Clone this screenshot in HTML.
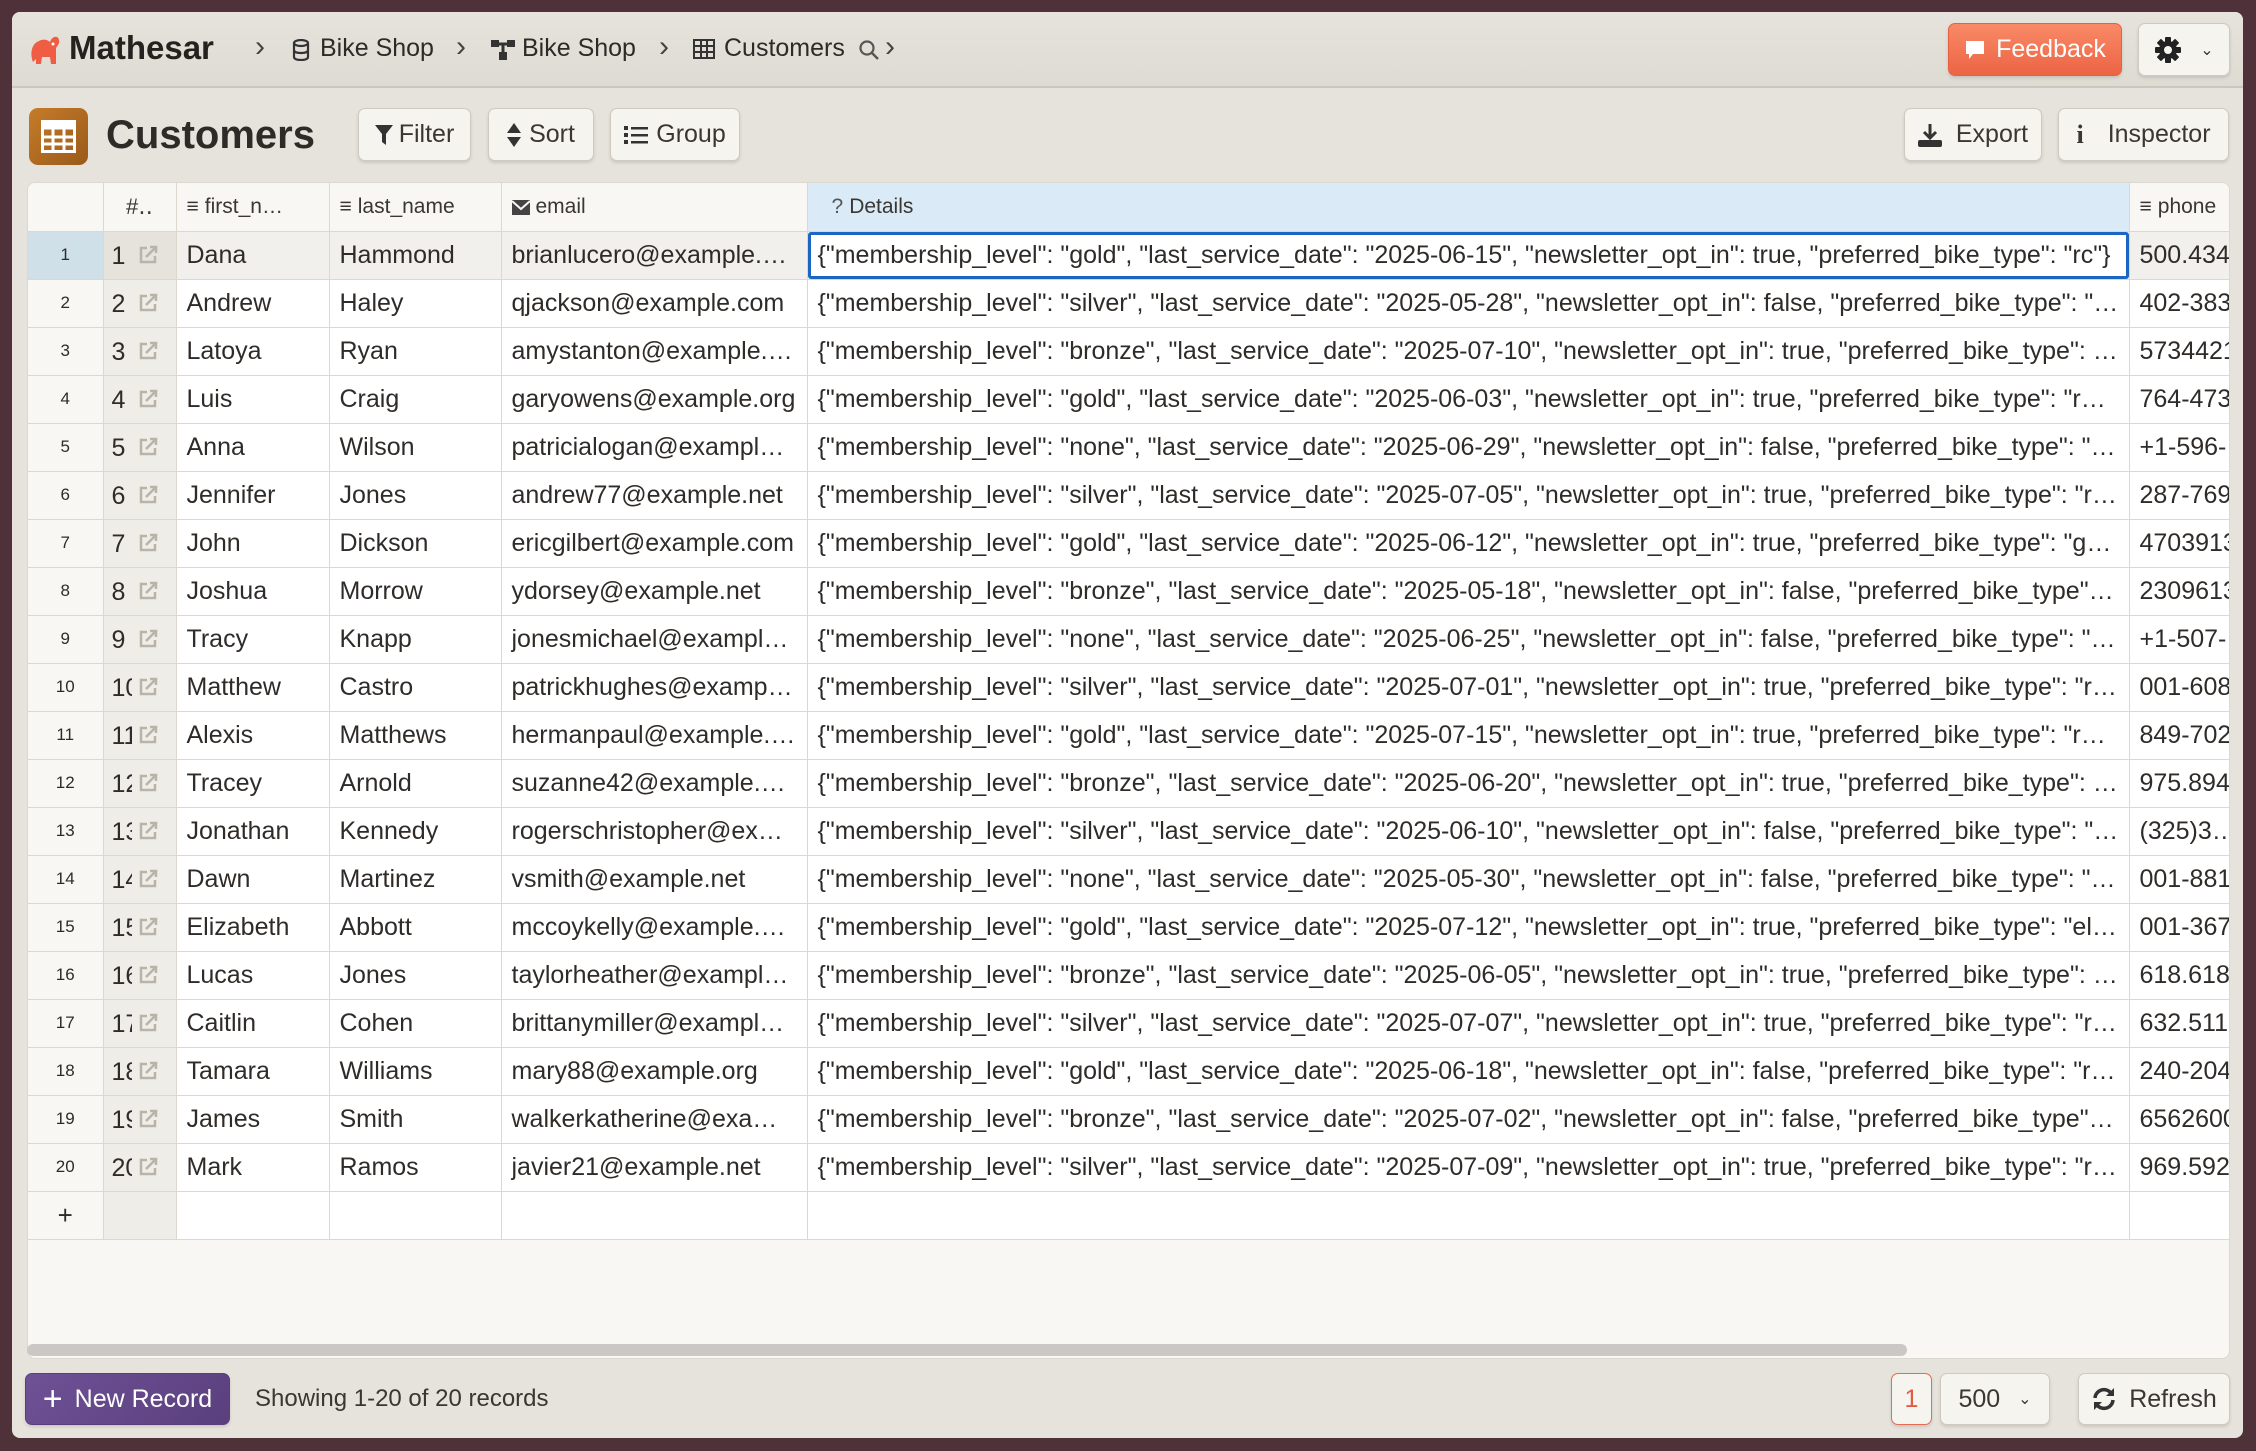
<!DOCTYPE html>
<html><head><meta charset="utf-8">
<style>
*{box-sizing:border-box;margin:0;padding:0}
body{width:2256px;height:1451px;background:#4f3239;font-family:"Liberation Sans","DejaVu Sans",sans-serif;color:#2e2a27;position:relative;overflow:hidden}
.win{position:absolute;left:12px;top:12px;width:2231px;height:1426px;background:#e6e3dc;border-radius:8px;overflow:hidden}
.hdr{position:absolute;left:0;top:0;width:100%;height:76px;background:linear-gradient(#e6e3dc,#dedbd3);border-bottom:2px solid #cbc7be}
.a{position:absolute;white-space:nowrap}
.btn{position:absolute;background:#f6f4ef;border:1.5px solid #cfcac0;border-radius:7px;box-shadow:0 2px 3px rgba(0,0,0,.12);font-size:25px;color:#3b3633;display:flex;align-items:center;justify-content:center;gap:10px}
.grid{position:absolute;left:15px;top:170px;width:2203px;height:1177px;background:#f8f7f3;border:1px solid #dcd8cf;border-radius:8px;overflow:hidden}
table{border-collapse:collapse;table-layout:fixed;position:absolute;left:0;top:0;width:2221px}
td,th{height:48px;border-right:1.5px solid #dcd8ce;border-bottom:1.5px solid #dcd8ce;white-space:nowrap;overflow:hidden;text-overflow:ellipsis;font-size:25px;font-weight:normal;text-align:left;padding:0 10px;color:#2f2b28;background:#fff}
th{background:#f8f7f3;font-size:21px;color:#3a3632}
td.rn{background:#f8f7f3;font-size:17px;text-align:center;padding:0}
td.id{background:#efede8;padding:0 8px;position:relative;text-overflow:clip}
td.id span{position:absolute;left:8px;top:10px;width:20px;overflow:hidden}
td.id svg{position:absolute;left:34px;top:13px}
tr.sel td{background:#f2f0ec}
tr.sel td.rn{background:#cfe0e8}
tr.sel td.id{background:#e6e3dd}
.ic{display:inline-block;vertical-align:middle;margin-right:6px}
</style></head><body>
<div class="win">
 <div class="hdr">
  <svg class="a" style="left:15px;top:20px" width="36" height="36" viewBox="0 0 36 36"><path d="M6 30 C3 22 4 12 12 9 C15 7 20 7 23 10 C25 4 31 3 32 8 C33 12 30 14 29 16 L29 32 L24 32 L23 25 L15 25 L14 32 L9 32 L9 27 C7 29 6 30 6 30Z" fill="#ef5d45"/><circle cx="26" cy="12" r="1.5" fill="#fff"/></svg>
  <div class="a" style="left:57px;top:17px;font-size:33px;font-weight:bold;color:#25211f">Mathesar</div>
  <div class="a" style="left:243px;top:18px;font-size:30px;color:#444">›</div>
  <svg class="a" style="left:280px;top:27px" width="18" height="22" viewBox="0 0 18 22"><ellipse cx="9" cy="4" rx="7" ry="3" fill="none" stroke="#333" stroke-width="2.2"/><path d="M2 4v14c0 2 3 3 7 3s7-1 7-3V4M2 11c0 2 3 3 7 3s7-1 7-3" fill="none" stroke="#333" stroke-width="2.2"/></svg>
  <div class="a" style="left:308px;top:22px;font-size:25px">Bike Shop</div>
  <div class="a" style="left:444px;top:18px;font-size:30px;color:#444">›</div>
  <svg class="a" style="left:479px;top:28px" width="24" height="20" viewBox="0 0 24 20"><rect x="0" y="0" width="8" height="7" fill="#333"/><rect x="16" y="0" width="8" height="7" fill="#333"/><rect x="8" y="12" width="8" height="8" fill="#333"/><path d="M4 4h16M12 4v10" stroke="#333" stroke-width="3"/></svg>
  <div class="a" style="left:510px;top:22px;font-size:25px">Bike Shop</div>
  <div class="a" style="left:647px;top:18px;font-size:30px;color:#444">›</div>
  <svg class="a" style="left:681px;top:27px" width="22" height="20" viewBox="0 0 22 20"><rect x="1" y="1" width="20" height="18" fill="none" stroke="#333" stroke-width="2"/><path d="M1 7h20M1 13h20M8 1v18M14 1v18" stroke="#333" stroke-width="2"/></svg>
  <div class="a" style="left:712px;top:22px;font-size:25px">Customers</div>
  <svg class="a" style="left:846px;top:27px" width="22" height="22" viewBox="0 0 22 22"><circle cx="9" cy="9" r="6.5" fill="none" stroke="#555" stroke-width="2.2"/><path d="M14 14l6 6" stroke="#555" stroke-width="2.4"/></svg>
  <div class="a" style="left:873px;top:18px;font-size:30px;color:#444">›</div>
  <div class="btn" style="left:1936px;top:11px;width:174px;height:53px;background:linear-gradient(#f98a67,#ec6444);border-color:#e8603f;color:#fff;font-size:25px"><svg width="22" height="22" viewBox="0 0 22 22"><path d="M2 2h18v13H9l-4 5v-5H2z" fill="#fff"/></svg>Feedback</div>
  <div class="btn" style="left:2126px;top:11px;width:92px;height:53px;gap:18px"><svg width="28" height="28" viewBox="0 0 28 28"><g fill="#222"><circle cx="14" cy="14" r="9"/><rect x="11" y="1" width="6" height="26" rx="1"/><rect x="11" y="1" width="6" height="26" rx="1" transform="rotate(45 14 14)"/><rect x="11" y="1" width="6" height="26" rx="1" transform="rotate(90 14 14)"/><rect x="11" y="1" width="6" height="26" rx="1" transform="rotate(135 14 14)"/></g><circle cx="14" cy="14" r="4" fill="#f6f4ef"/></svg><span style="font-size:16px">⌄</span></div>
 </div>
 <div class="a" style="left:17px;top:96px;width:59px;height:57px;border-radius:9px;background:linear-gradient(135deg,#c57c2a,#9a5a1a)"><svg style="position:absolute;left:12px;top:12px" width="35" height="33" viewBox="0 0 35 33"><rect x="1.5" y="1.5" width="32" height="30" fill="none" stroke="#fff" stroke-width="3"/><rect x="1.5" y="1.5" width="32" height="8" fill="#fff"/><path d="M1.5 17h32M1.5 24h32M12 9v23M23 9v23" stroke="#fff" stroke-width="3"/></svg></div>
 <div class="a" style="left:94px;top:101px;font-size:40px;font-weight:bold;color:#2f2a27">Customers</div>
 <div class="btn" style="left:346px;top:96px;width:113px;height:53px;gap:6px"><svg width="18" height="20" viewBox="0 0 18 20"><path d="M0 0h18l-7 9v11l-4-3V9z" fill="#333"/></svg>Filter</div>
 <div class="btn" style="left:476px;top:96px;width:106px;height:53px;gap:8px"><svg width="14" height="24" viewBox="0 0 14 24"><path d="M7 0l7 10H0zM7 24l7-10H0z" fill="#333"/></svg>Sort</div>
 <div class="btn" style="left:598px;top:96px;width:130px;height:53px;gap:8px"><svg width="24" height="20" viewBox="0 0 24 20"><g fill="#333"><rect x="0" y="1" width="4" height="4"/><rect x="0" y="8" width="4" height="4"/><rect x="0" y="15" width="4" height="4"/><rect x="7" y="2" width="17" height="2.5"/><rect x="7" y="9" width="17" height="2.5"/><rect x="7" y="16" width="17" height="2.5"/></g></svg>Group</div>
 <div class="btn" style="left:1892px;top:96px;width:138px;height:53px;gap:14px"><svg width="24" height="24" viewBox="0 0 24 24"><path d="M12 1v13M6 9l6 6 6-6" fill="none" stroke="#333" stroke-width="3"/><rect x="0" y="17" width="24" height="7" rx="2" fill="#333"/></svg>Export</div>
 <div class="btn" style="left:2046px;top:96px;width:171px;height:53px;gap:24px"><span style="font-weight:bold;font-size:26px;font-family:'Liberation Serif',serif">i</span>Inspector</div>

 <div class="grid">
 <table>
  <colgroup><col style="width:75px"><col style="width:73px"><col style="width:153px"><col style="width:172px"><col style="width:306px"><col style="width:1322px"><col style="width:120px"></colgroup>
  <tr><th></th><th style="text-align:center;font-size:22px">#‥</th>
   <th><span class="ic">≡</span>first_n…</th><th><span class="ic">≡</span>last_name</th>
   <th><svg class="ic" width="18" height="15" viewBox="0 0 18 15"><rect width="18" height="15" fill="#444"/><path d="M0 1l9 8 9-8" fill="none" stroke="#f8f7f3" stroke-width="2"/></svg>email</th>
   <th style="background:#daeaf7;padding-left:24px"><span class="ic" style="color:#555">?</span>Details</th>
   <th><span class="ic">≡</span>phone</th></tr>
 </table>
 </div>
</div>
<div class="a" style="left:27px;top:1344px;width:1880px;height:12px;border-radius:6px;background:#c9c8c5"></div>
<div class="btn" style="left:25px;top:1373px;width:205px;height:52px;background:linear-gradient(135deg,#6f5196,#5a3f7d);border-color:#5a3f7d;color:#fff;gap:12px"><span style="font-size:34px;font-weight:300;line-height:1">+</span>New Record</div>
<div class="a" style="left:255px;top:1385px;font-size:24px;color:#3a3632">Showing 1-20 of 20 records</div>
<div class="btn" style="left:1891px;top:1373px;width:41px;height:52px;border-color:#e86a55;color:#e55a45">1</div>
<div class="btn" style="left:1940px;top:1373px;width:110px;height:52px;gap:18px">500 <span style="font-size:16px">⌄</span></div>
<div class="btn" style="left:2078px;top:1373px;width:152px;height:52px;gap:12px"><svg width="26" height="26" viewBox="0 0 26 26"><path d="M4 12a9 9 0 0 1 16-5M22 14a9 9 0 0 1-16 5" fill="none" stroke="#333" stroke-width="3.5"/><path d="M23 2v8h-8zM3 24v-8h8z" fill="#333"/></svg>Refresh</div>

<script>
const rows=[["Dana","Hammond","brianlucero@example.com",'{"membership_level": "gold", "last_service_date": "2025-06-15", "newsletter_opt_in": true, "preferred_bike_type": "rc"}',"500.434"],
["Andrew","Haley","qjackson@example.com",'{"membership_level": "silver", "last_service_date": "2025-05-28", "newsletter_opt_in": false, "preferred_bike_type": "mountain"}',"402-383"],
["Latoya","Ryan","amystanton@example.org",'{"membership_level": "bronze", "last_service_date": "2025-07-10", "newsletter_opt_in": true, "preferred_bike_type": "hybrid"}',"5734421"],
["Luis","Craig","garyowens@example.org",'{"membership_level": "gold", "last_service_date": "2025-06-03", "newsletter_opt_in": true, "preferred_bike_type": "road"}',"764-473"],
["Anna","Wilson","patricialogan@example.com",'{"membership_level": "none", "last_service_date": "2025-06-29", "newsletter_opt_in": false, "preferred_bike_type": "road"}',"+1-596-"],
["Jennifer","Jones","andrew77@example.net",'{"membership_level": "silver", "last_service_date": "2025-07-05", "newsletter_opt_in": true, "preferred_bike_type": "road"}',"287-769"],
["John","Dickson","ericgilbert@example.com",'{"membership_level": "gold", "last_service_date": "2025-06-12", "newsletter_opt_in": true, "preferred_bike_type": "gravel"}',"4703913"],
["Joshua","Morrow","ydorsey@example.net",'{"membership_level": "bronze", "last_service_date": "2025-05-18", "newsletter_opt_in": false, "preferred_bike_type": "road"}',"2309613"],
["Tracy","Knapp","jonesmichael@example.com",'{"membership_level": "none", "last_service_date": "2025-06-25", "newsletter_opt_in": false, "preferred_bike_type": "road"}',"+1-507-"],
["Matthew","Castro","patrickhughes@example.com",'{"membership_level": "silver", "last_service_date": "2025-07-01", "newsletter_opt_in": true, "preferred_bike_type": "road"}',"001-608"],
["Alexis","Matthews","hermanpaul@example.com",'{"membership_level": "gold", "last_service_date": "2025-07-15", "newsletter_opt_in": true, "preferred_bike_type": "road"}',"849-702"],
["Tracey","Arnold","suzanne42@example.com",'{"membership_level": "bronze", "last_service_date": "2025-06-20", "newsletter_opt_in": true, "preferred_bike_type": "road"}',"975.894"],
["Jonathan","Kennedy","rogerschristopher@example.com",'{"membership_level": "silver", "last_service_date": "2025-06-10", "newsletter_opt_in": false, "preferred_bike_type": "road"}',"(325)363"],
["Dawn","Martinez","vsmith@example.net",'{"membership_level": "none", "last_service_date": "2025-05-30", "newsletter_opt_in": false, "preferred_bike_type": "road"}',"001-881"],
["Elizabeth","Abbott","mccoykelly@example.com",'{"membership_level": "gold", "last_service_date": "2025-07-12", "newsletter_opt_in": true, "preferred_bike_type": "electric"}',"001-367"],
["Lucas","Jones","taylorheather@example.com",'{"membership_level": "bronze", "last_service_date": "2025-06-05", "newsletter_opt_in": true, "preferred_bike_type": "road"}',"618.618."],
["Caitlin","Cohen","brittanymiller@example.com",'{"membership_level": "silver", "last_service_date": "2025-07-07", "newsletter_opt_in": true, "preferred_bike_type": "road"}',"632.511."],
["Tamara","Williams","mary88@example.org",'{"membership_level": "gold", "last_service_date": "2025-06-18", "newsletter_opt_in": false, "preferred_bike_type": "road"}',"240-204"],
["James","Smith","walkerkatherine@example.com",'{"membership_level": "bronze", "last_service_date": "2025-07-02", "newsletter_opt_in": false, "preferred_bike_type": "road"}',"6562600"],
["Mark","Ramos","javier21@example.net",'{"membership_level": "silver", "last_service_date": "2025-07-09", "newsletter_opt_in": true, "preferred_bike_type": "road"}',"969.592"]];
const link='<svg width="20" height="20" viewBox="0 0 20 20"><path d="M9 3H3v14h14v-6" fill="none" stroke="#b9b3a8" stroke-width="2.5"/><path d="M8 12L18 2M12 2h6v6" fill="none" stroke="#b9b3a8" stroke-width="2.5"/></svg>';
let h='';
rows.forEach((r,i)=>{const n=i+1;
h+=`<tr${i==0?' class="sel"':''}><td class="rn">${n}</td><td class="id"><span>${n}</span>${link}</td><td>${r[0]}</td><td>${r[1]}</td><td>${r[2]}</td>`+
(i==0?`<td style="background:#fff;box-shadow:inset 0 0 0 3px #1b66c4;border-radius:3px;padding-left:10px">${r[3].replace(/"/g,'&quot;')}</td>`:`<td>${r[3].replace(/"/g,'&quot;')}</td>`)+`<td>${r[4]}</td></tr>`;});
h+='<tr><td class="rn" style="font-size:26px">+</td><td class="id"></td><td></td><td></td><td></td><td></td><td></td></tr>';
document.querySelector('table').insertAdjacentHTML('beforeend',h);
</script>
</body></html>
